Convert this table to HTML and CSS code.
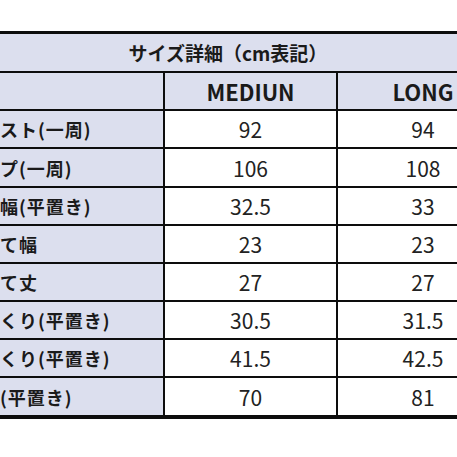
FILE: index.html
```html
<!DOCTYPE html>
<html lang="ja">
<head>
<meta charset="utf-8">
<link rel="stylesheet" href="styles.css">
</head>
<body>
<div class="page">
  <div class="sheet">
    <div class="cell title">サイズ詳細（cm表記）</div>
    <div class="cell label"></div>
    <div class="cell head">MEDIUN</div>
    <div class="cell head">LONG</div>

    <div class="cell label">スト(一周)</div>
    <div class="cell num">92</div>
    <div class="cell num">94</div>

    <div class="cell label">プ(一周)</div>
    <div class="cell num">106</div>
    <div class="cell num">108</div>

    <div class="cell label">幅(平置き)</div>
    <div class="cell num">32.5</div>
    <div class="cell num">33</div>

    <div class="cell label">て幅</div>
    <div class="cell num">23</div>
    <div class="cell num">23</div>

    <div class="cell label">て丈</div>
    <div class="cell num">27</div>
    <div class="cell num">27</div>

    <div class="cell label">くり(平置き)</div>
    <div class="cell num">30.5</div>
    <div class="cell num">31.5</div>

    <div class="cell label">くり(平置き)</div>
    <div class="cell num">41.5</div>
    <div class="cell num">42.5</div>

    <div class="cell label">(平置き)</div>
    <div class="cell num">70</div>
    <div class="cell num">81</div>
  </div>
</div>
</body>
</html>
```
FILE: styles.css
```css
html, body {
  margin: 0;
  padding: 0;
  background: #ffffff;
  overflow: hidden;
}
.page {
  width: 457px;
  height: 457px;
  overflow: hidden;
  padding-top: 31px;
  box-sizing: border-box;
}
.sheet {
  margin-left: -52px;
  width: 560px;
  display: grid;
  grid-template-columns: 215px 171px 170px;
  grid-template-rows: 37px 36px 36px 37px 36px 36px 36px 36px 36px 37px;
  column-gap: 2px;
  row-gap: 2px;
  background: #0d0d0d;
  padding: 3px 0 4px 0;
  font-family: "Noto Sans CJK JP", "Noto Sans", sans-serif;
  color: #1a1a1a;
}
.cell {
  display: flex;
  align-items: center;
  justify-content: center;
  background: #ffffff;
  white-space: nowrap;
}
.title {
  grid-column: 1 / 4;
  background: #dcdfee;
  font-weight: 700;
  font-size: 19px;
}
.label {
  background: #dcdfee;
  justify-content: flex-start;
  padding-left: 52px;
  font-weight: 700;
  font-size: 18px;
  letter-spacing: 1px;
}
.head {
  background: #dcdfee;
  font-weight: 700;
  font-size: 22px;
}
.num {
  font-weight: 400;
  font-size: 21px;
  color: #222222;
}
```
